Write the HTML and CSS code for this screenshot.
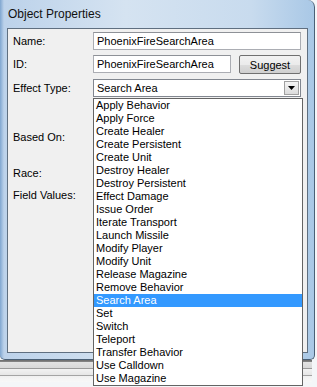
FILE: index.html
```html
<!DOCTYPE html>
<html lang="en">
<head>
    <meta charset="UTF-8">
    <meta name="viewport" content="width=device-width, initial-scale=1.0">
    <title>Object Properties</title>
    <link rel="stylesheet" href="styles.css">
</head>
<body>
<div class="desktop">
    <!-- Dialog vindue -->
    <div class="window">
        <div class="titlebar">Object Properties</div>
        <div class="client">
            <div class="row">
                <span class="label">Name:</span>
                <input class="text wide" type="text" value="PhoenixFireSearchArea">
            </div>
            <div class="row id-row">
                <span class="label">ID:</span>
                <input class="text short" type="text" value="PhoenixFireSearchArea">
                <button class="btn" type="button">Suggest</button>
            </div>
            <div class="row">
                <span class="label">Effect Type:</span>
                <div class="combo">
                    <span class="combo-value">Search Area</span>
                    <span class="combo-arrow">
                        <svg width="7" height="4" viewBox="0 0 7 4"><path d="M0 0H7L3.5 4Z" fill="#000"/></svg>
                    </span>
                </div>
            </div>
            <div class="label based">Based On:</div>
            <div class="label race">Race:</div>
            <div class="label fields">Field Values:</div>
        </div>
    </div>
    <!-- Vindue bagved -->
    <div class="behind"></div>

    <!-- Aaben dropdown liste -->
    <ul class="droplist">
        <li>Apply Behavior</li>
        <li>Apply Force</li>
        <li>Create Healer</li>
        <li>Create Persistent</li>
        <li>Create Unit</li>
        <li>Destroy Healer</li>
        <li>Destroy Persistent</li>
        <li>Effect Damage</li>
        <li>Issue Order</li>
        <li>Iterate Transport</li>
        <li>Launch Missile</li>
        <li>Modify Player</li>
        <li>Modify Unit</li>
        <li>Release Magazine</li>
        <li>Remove Behavior</li>
        <li class="selected">Search Area</li>
        <li>Set</li>
        <li>Switch</li>
        <li>Teleport</li>
        <li>Transfer Behavior</li>
        <li>Use Calldown</li>
        <li>Use Magazine</li>
    </ul>
</div>
</body>
</html>
```

FILE: styles.css
```css
body {
    margin: 0;
    background: #f4f6f8;
    font-family: "Liberation Sans", Arial, sans-serif;
    font-size: 11px;
    color: #000;
}
.desktop {
    position: relative;
    width: 317px;
    height: 387px;
    overflow: hidden;
}
.window {
    width: 315px;
    height: 360px;
    box-sizing: border-box;
    padding: 0 6px 6px 7px;
    border-right: 1px solid #4a6076;
    border-bottom: 1px solid #4a6076;
    border-top-right-radius: 7px;
    border-bottom-right-radius: 5px;
    border-bottom-left-radius: 5px;
    background: linear-gradient(90deg, #7fa6d0 0px, #bcd2ea 4px, #d5e3f1 40%, #c8dbee 80%, #a9c8e6 100%);
}
.titlebar {
    height: 28px;
    line-height: 28px;
    padding-left: 1px;
    font-size: 12px;
    color: #111;
}
.client {
    height: 325px;
    box-sizing: border-box;
    border: 1px solid #5f6f80;
    background: #f0f0f0;
    padding: 3px 0 0 5px;
    display: flex;
    flex-direction: column;
}
.row {
    display: flex;
    align-items: center;
    height: 18px;
    margin-bottom: 5px;
}
.id-row {
    height: 19px;
    margin-bottom: 5px;
}
.id-row .text {
    align-self: flex-start;
}
.label {
    width: 80px;
    line-height: 13px;
    flex: none;
}
.id-row .label {
    margin-top: -1px;
}
.text {
    height: 18px;
    box-sizing: border-box;
    border: 1px solid #abadb3;
    border-top-color: #8e9197;
    background: #fff;
    padding: 0 3px;
    font-family: "Liberation Sans", Arial, sans-serif;
    font-size: 11px;
    color: #000;
    outline: none;
    margin: 0;
}
.wide {
    width: 208px;
}
.short {
    width: 138px;
}
.btn {
    margin: 0 0 0 8px;
    width: 62px;
    height: 19px;
    box-sizing: border-box;
    border: 1px solid #707070;
    border-radius: 2px;
    background: linear-gradient(#f2f2f2 0%, #ebebeb 50%, #dddddd 51%, #cfcfcf 100%);
    font-family: "Liberation Sans", Arial, sans-serif;
    font-size: 11px;
    padding: 0;
    color: #000;
}
.combo {
    width: 208px;
    height: 18px;
    box-sizing: border-box;
    border: 1px solid #828790;
    background: #fff;
    display: flex;
    align-items: center;
    justify-content: space-between;
    padding-left: 3px;
}
.combo-arrow {
    width: 15px;
    height: 14px;
    margin-right: 1px;
    box-sizing: border-box;
    border: 1px solid #a0a0a0;
    background: linear-gradient(#f4f4f4, #dcdcdc);
    display: flex;
    align-items: center;
    justify-content: center;
}
.based {
    margin-top: 29px;
}
.race {
    margin-top: 23px;
}
.fields {
    margin-top: 9px;
}
.behind {
    width: 312px;
    height: 22px;
    background: linear-gradient(#6a6a6a 0px, #8a8a8a 2px, #e3e3e3 2px, #d8d8d8 8px, #9a9a9a 8px, #9a9a9a 9px, #f2f2f2 9px, #e6e6e6 15px, #a4a4a4 15px, #a4a4a4 16px, #f0f0f0 16px, #f8f8f8 22px);
}
.droplist {
    position: absolute;
    left: 93px;
    top: 98px;
    width: 210px;
    margin: 0;
    padding: 0;
    list-style: none;
    box-sizing: border-box;
    border: 1px solid #646464;
    background: #fff;
}
.droplist li {
    height: 13px;
    line-height: 13px;
    padding-left: 2px;
    white-space: nowrap;
}
.droplist li.selected {
    background: #3399ff;
    color: #fff;
}
```
